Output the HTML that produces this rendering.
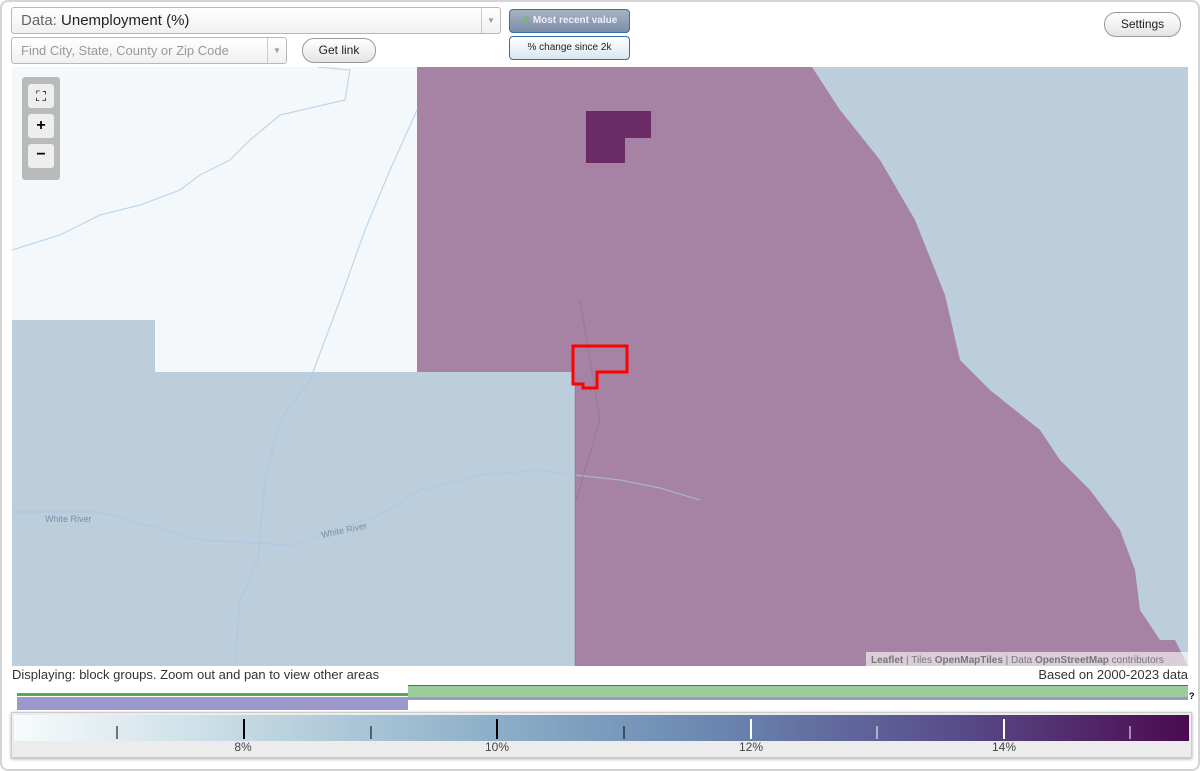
<!DOCTYPE html>
<html><head><meta charset="utf-8"><style>
body{margin:0;width:1200px;height:771px;background:#fff;font-family:"Liberation Sans",sans-serif;overflow:hidden;position:relative}
.frame{position:absolute;left:0;top:0;width:1196px;height:767px;border:2px solid #d4d4d4;border-radius:8px}
.abs{position:absolute}
.sel{left:11px;top:7px;border:1px solid #b8b8b8;border-radius:3px;background:linear-gradient(#fff,#f0f0f0);font-size:15px;color:#222;line-height:25px;box-sizing:border-box;width:490px;height:27px;padding-left:9px}
.arr{position:absolute;right:0;top:0;width:18px;height:100%;border-left:1px solid #ccc;color:#999;font-size:8px;text-align:center}
.btn{border:1px solid #999;border-radius:12px;background:linear-gradient(#fff,#e4e4e4);font-size:12px;text-align:center;color:#222}
</style></head><body>
<div class="frame"></div>
<div class="abs sel"><span style="color:#666">Data:</span> Unemployment (%)<div class="arr" style="line-height:25px">▼</div></div>
<div class="abs sel" style="top:37px;width:276px;height:27px;font-size:13px;color:#999">Find City, State, County or Zip Code<div class="arr" style="line-height:25px">▼</div></div>
<div class="abs btn" style="left:302px;top:38px;width:72px;height:23px;line-height:23px">Get link</div>
<div class="abs" style="left:509px;top:9px;width:119px;height:22px;border:1px solid #3a6ea8;border-radius:4px;background:linear-gradient(#a5b2c4,#7d8ea6);color:#eef;font-size:10px;font-weight:bold;line-height:22px;text-align:center"><span style="color:#6c3">✔</span> Most recent value</div>
<div class="abs" style="left:509px;top:36px;width:119px;height:22px;border:1px solid #3a6ea8;border-radius:4px;background:linear-gradient(#fff,#d8e6f2);color:#222;font-size:10px;line-height:22px;text-align:center">% change since 2k</div>
<div class="abs btn" style="left:1104px;top:12px;width:75px;height:23px;line-height:23px">Settings</div>

<svg class="abs" style="left:12px;top:67px" width="1176" height="599" viewBox="12 67 1176 599">
<rect x="12" y="67" width="1176" height="599" fill="#bccddc"/>
<rect x="12" y="67" width="405" height="305" fill="#f4f8fa"/>
<rect x="12" y="320" width="143" height="52" fill="#bccddc"/>
<polygon fill="#a683a4" points="417,67 812,67 840,110 880,160 915,220 945,295 960,360 990,390 1040,430 1060,460 1090,490 1120,530 1135,570 1140,610 1160,640 1175,640 1188,666 575,666 575,372 417,372"/>
<polygon fill="#6b2b67" points="586,111 651,111 651,138 625,138 625,163 586,163"/>
<g fill="none" stroke="#a7c8e6" stroke-width="1.2" opacity="0.7">
<path d="M317,67 L350,70 L345,100 L280,115 L250,140 L230,160 L200,175 L180,190 L140,205 L100,215 L60,235 L12,250"/>
<path d="M417,110 L390,170 L365,230 L340,300 L310,380 L280,420 L265,480 L258,560 L240,600 L235,666"/>
<path d="M12,512 L100,512 L200,540 L290,545 L380,515 L420,490 L480,475 L540,470 L575,475 L620,480 L660,488 L700,500"/>
</g>
<path d="M575,372 L575,666 M580,300 L600,420 L576,500" stroke="#8a6a8a" fill="none" stroke-width="1" opacity="0.5"/>
<path d="M573,346 L627,346 L627,372 L597,372 L597,388 L583,388 L583,384 L573,384 Z" fill="none" stroke="#f00" stroke-width="3"/>
<text x="45" y="522" font-size="9" fill="#7790a8">White River</text>
<text x="322" y="538" font-size="9" fill="#7790a8" transform="rotate(-12 322 538)">White River</text>
<rect x="866" y="652" width="322" height="14" fill="rgba(255,255,255,0.6)"/>
<text x="871" y="663" font-size="10" fill="#777"><tspan font-weight="bold">Leaflet</tspan> | Tiles <tspan font-weight="bold">OpenMapTiles</tspan> | Data <tspan font-weight="bold">OpenStreetMap</tspan> contributors</text>
</svg>
<div class="abs" style="left:22px;top:77px;width:38px;height:103px;background:#aaa;border-radius:3px;opacity:.8"></div>
<div class="abs" style="left:28px;top:84px;width:26px;height:24px;background:#eee;border-radius:3px;text-align:center;font-size:14px;line-height:24px">⛶</div>
<div class="abs" style="left:28px;top:114px;width:26px;height:24px;background:#eee;border-radius:3px;text-align:center;font-size:16px;font-weight:bold;line-height:24px">+</div>
<div class="abs" style="left:28px;top:144px;width:26px;height:24px;background:#eee;border-radius:3px;text-align:center;font-size:16px;font-weight:bold;line-height:22px">−</div>

<div class="abs" style="left:12px;top:667px;font-size:13px;color:#333">Displaying: block groups. Zoom out and pan to view other areas</div>
<div class="abs" style="right:12px;top:667px;font-size:13px;color:#333">Based on 2000-2023 data</div>
<div class="abs" style="left:17px;top:693px;width:391px;height:3px;background:#5a5"></div>
<div class="abs" style="left:408px;top:685px;width:780px;height:11px;background:#9bcc99;border-top:1px solid #383"></div>
<div class="abs" style="left:17px;top:697px;width:391px;height:13px;background:#9b99cb"></div>
<div class="abs" style="left:408px;top:697px;width:780px;height:3px;background:#9b99cb"></div>
<div class="abs" style="left:1189px;top:691px;font-size:9px;font-weight:bold">?</div>
<div class="abs" style="left:11px;top:712px;width:1179px;height:44px;border:1px solid #ccc;box-shadow:0 1px 3px #aaa;background:#ececec"></div>
<div class="abs" style="left:14px;top:715px;width:1175px;height:26px;background:linear-gradient(90deg,#f7fbfc,#c2d8e2 20%,#8fb0c9 40%,#6a86b0 60%,#584d8a 80%,#4b0a50)"></div>
<svg class="abs" style="left:0;top:715px" width="1200" height="40">
<g stroke="#000"><line x1="117" y1="11" x2="117" y2="24"/><line x1="244" y1="4" x2="244" y2="24" stroke-width="2"/><line x1="371" y1="11" x2="371" y2="24"/><line x1="497" y1="4" x2="497" y2="24" stroke-width="2"/><line x1="624" y1="11" x2="624" y2="24"/></g>
<g stroke="#fff"><line x1="751" y1="4" x2="751" y2="24" stroke-width="2"/><line x1="877" y1="11" x2="877" y2="24"/><line x1="1004" y1="4" x2="1004" y2="24" stroke-width="2"/><line x1="1130" y1="11" x2="1130" y2="24"/></g>
<g font-size="12" fill="#444" text-anchor="middle"><text x="243" y="36">8%</text><text x="497" y="36">10%</text><text x="751" y="36">12%</text><text x="1004" y="36">14%</text></g>
</svg>
</body></html>
